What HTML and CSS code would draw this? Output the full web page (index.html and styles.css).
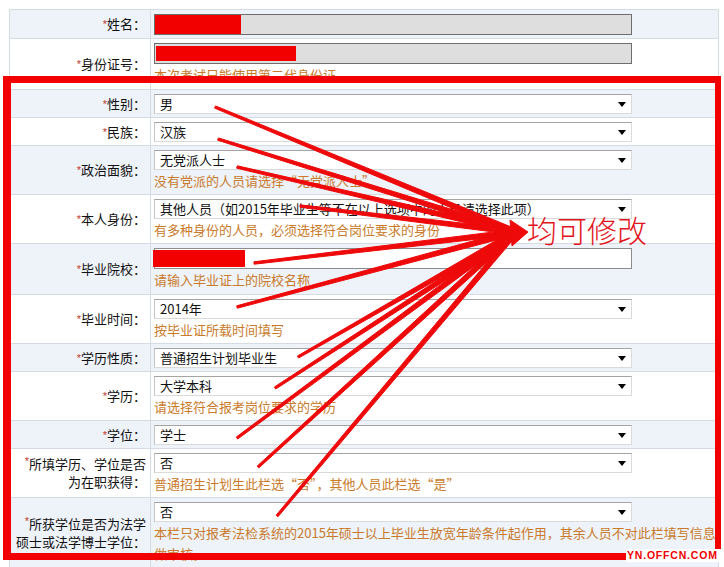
FILE: index.html
```html
<!DOCTYPE html>
<html lang="zh-CN">
<head>
<meta charset="utf-8">
<title>报名信息</title>
<link rel="stylesheet" href="styles.css">
</head>
<body>
<div class="page">
  <div class="form">
    <div class="row alt">
      <div class="lab"><span class="req">*</span>姓名：</div>
      <div class="val"><div class="inp ro"><span class="redact r-name"></span></div></div>
    </div>
    <div class="row">
      <div class="lab"><span class="req">*</span>身份证号：</div>
      <div class="val"><div class="inp ro"><span class="redact r-id"></span></div><div class="hint tall">本次考试只能使用第二代身份证</div></div>
    </div>
    <div class="row alt">
      <div class="lab"><span class="req">*</span>性别：</div>
      <div class="val"><div class="sel">男</div></div>
    </div>
    <div class="row">
      <div class="lab"><span class="req">*</span>民族：</div>
      <div class="val"><div class="sel">汉族</div></div>
    </div>
    <div class="row alt">
      <div class="lab"><span class="req">*</span>政治面貌：</div>
      <div class="val"><div class="sel">无党派人士</div><div class="hint">没有党派的人员请选择“无党派人士”</div></div>
    </div>
    <div class="row">
      <div class="lab"><span class="req">*</span>本人身份：</div>
      <div class="val"><div class="sel">其他人员（如2015年毕业生等不在以上选项中的人员请选择此项）</div><div class="hint">有多种身份的人员，必须选择符合岗位要求的身份</div></div>
    </div>
    <div class="row alt">
      <div class="lab"><span class="req">*</span>毕业院校：</div>
      <div class="val"><div class="inp wh"><span class="redact r-school"></span></div><div class="hint tall">请输入毕业证上的院校名称</div></div>
    </div>
    <div class="row">
      <div class="lab"><span class="req">*</span>毕业时间：</div>
      <div class="val"><div class="sel">2014年</div><div class="hint">按毕业证所载时间填写</div></div>
    </div>
    <div class="row alt">
      <div class="lab"><span class="req">*</span>学历性质：</div>
      <div class="val"><div class="sel">普通招生计划毕业生</div></div>
    </div>
    <div class="row">
      <div class="lab"><span class="req">*</span>学历：</div>
      <div class="val"><div class="sel">大学本科</div><div class="hint">请选择符合报考岗位要求的学历</div></div>
    </div>
    <div class="row alt">
      <div class="lab"><span class="req">*</span>学位：</div>
      <div class="val"><div class="sel">学士</div></div>
    </div>
    <div class="row">
      <div class="lab"><span class="two"><span class="req">*</span>所填学历、学位是否<br>为在职获得：</span></div>
      <div class="val"><div class="sel">否</div><div class="hint">普通招生计划生此栏选“否”，其他人员此栏选“是”</div></div>
    </div>
    <div class="row alt">
      <div class="lab"><span class="two"><span class="req">*</span>所获学位是否为法学<br>硕士或法学博士学位：</span></div>
      <div class="val"><div class="sel">否</div><div class="hint">本栏只对报考法检系统的2015年硕士以上毕业生放宽年龄条件起作用，其余人员不对此栏填写信息<br>做审核。</div></div>
    </div>
  </div>

  <div class="frame"></div>

  <svg class="arrows" width="724" height="567" viewBox="0 0 724 567">
    <g fill="#ee0a0a" stroke="#ee0a0a" stroke-width="1" stroke-linejoin="round">
      <polygon points="214.5,108.1 514.9,234.6 517.1,229.4 215.5,105.9"/>
      <polygon points="217.6,140.2 515.2,234.7 516.8,229.3 218.4,137.9"/>
      <polygon points="236.7,168.2 515.4,234.7 516.6,229.3 237.3,165.8"/>
      <polygon points="299.9,207.2 515.7,234.8 516.3,229.2 300.1,204.8"/>
      <polygon points="254.1,264.2 516.3,234.8 515.7,229.2 253.9,261.8"/>
      <polygon points="237.3,308.2 516.7,234.7 515.3,229.3 236.7,305.8"/>
      <polygon points="298.6,358.0 517.4,234.4 514.6,229.6 297.4,356.0"/>
      <polygon points="275.7,389.0 517.5,234.4 514.5,229.7 274.4,387.0"/>
      <polygon points="237.7,439.0 517.7,234.3 514.3,229.8 236.3,437.0"/>
      <polygon points="258.8,467.9 517.9,234.1 514.1,229.9 257.2,466.1"/>
      <polygon points="277.9,516.8 518.1,233.8 513.9,230.2 276.1,515.2"/>
      <polygon points="528,232 510,220 512,246"/>
    </g>
  </svg>

  <div class="note">均可修改</div>
  <div class="mark">YN.OFFCN.COM</div>
</div>
</body>
</html>
```

FILE: styles.css
```css
body {
  margin: 0;
  background: #ffffff;
  font-family: "Noto Sans CJK SC", "Liberation Sans", sans-serif;
  font-size: 13px;
  color: #111111;
}

.page {
  position: relative;
  width: 724px;
  height: 567px;
  overflow: hidden;
}

.form {
  margin: 9px 0 0 9px;
  width: 708px;
  border-top: 1px solid #d5dbe3;
  border-left: 1px solid #d5dbe3;
  border-right: 1px solid #d5dbe3;
}

.row {
  display: grid;
  grid-template-columns: 141px 1fr;
  border-bottom: 1px solid #d5dbe3;
}

.row.alt {
  background: #eef2f9;
}

.lab {
  display: flex;
  align-items: center;
  justify-content: flex-end;
  text-align: right;
  padding-right: 4px;
  border-right: 1px solid #d5dbe3;
  line-height: 18px;
  color: #111111;
}

.two {
  display: block;
  line-height: 18px;
}

.req {
  color: #c0392b;
  font-family: "Liberation Sans", sans-serif;
  font-size: 11px;
  vertical-align: top;
  line-height: 12px;
}

.val {
  padding: 4px 0 3px 3px;
  min-width: 0;
}

.inp {
  width: 478px;
  height: 21px;
  box-sizing: border-box;
  border: 1px solid #6e6e6e;
  background: #dedede;
  display: flex;
}

.inp.wh {
  background: #ffffff;
  border-color: #8c8c8c;
}

.redact {
  display: block;
  background: #f20000;
}

.r-name {
  width: 86px;
  height: 19px;
}

.r-id {
  width: 140px;
  height: 15px;
  margin: 2px 0 0 1px;
}

.r-school {
  width: 92px;
  height: 17px;
  margin: 1px 0 0 -2px;
}

.sel {
  position: relative;
  width: 478px;
  height: 20px;
  box-sizing: border-box;
  border: 1px solid #dadada;
  border-top-color: #a4a4a4;
  border-left-color: #c4c4c4;
  background: #ffffff;
  padding-left: 5px;
  line-height: 18px;
  white-space: nowrap;
  color: #111111;
}

.sel::after {
  content: "";
  position: absolute;
  right: 5px;
  top: 7px;
  border-left: 4px solid transparent;
  border-right: 4px solid transparent;
  border-top: 5px solid #000000;
}

.hint {
  color: #c97a2a;
  line-height: 21px;
  white-space: nowrap;
}

.hint.tall {
  line-height: 22px;
}

.frame {
  position: absolute;
  left: 3px;
  top: 76px;
  width: 718px;
  height: 484px;
  box-sizing: border-box;
  border-style: solid;
  border-color: #f20000;
  border-width: 7px 6px 7px 8px;
}

.arrows {
  position: absolute;
  left: 0;
  top: 0;
}

.note {
  position: absolute;
  left: 527px;
  top: 213px;
  font-size: 30px;
  line-height: 33px;
  font-weight: 300;
  color: #e2141c;
  white-space: nowrap;
}

.mark {
  position: absolute;
  left: 626px;
  top: 549px;
  width: 98px;
  height: 13px;
  background: #ffffff;
  color: #f00000;
  font-family: "Liberation Sans", sans-serif;
  font-weight: bold;
  font-size: 10.5px;
  line-height: 13px;
  letter-spacing: 0.8px;
  padding-left: 1px;
  box-sizing: border-box;
  white-space: nowrap;
}
```
